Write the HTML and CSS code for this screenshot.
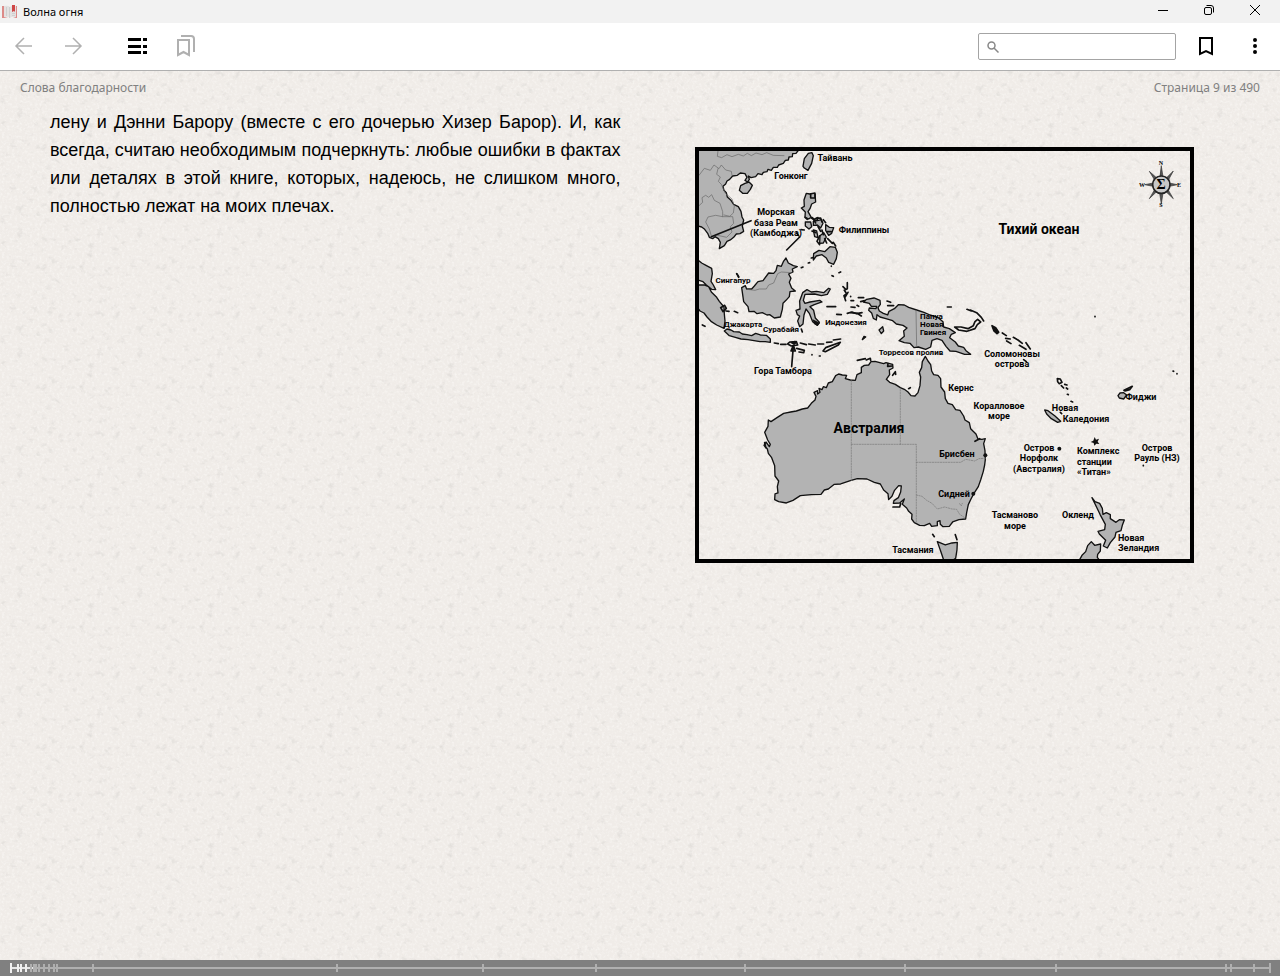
FILE: index.html
```html
<!DOCTYPE html>
<html lang="ru">
<head>
<meta charset="utf-8">
<meta name="viewport" content="width=device-width, initial-scale=1">
<title>Волна огня</title>
<link rel="stylesheet" href="styles.css">
</head>
<body>
<header class="titlebar">
  <svg class="app-icon" viewBox="0 0 16 14" aria-hidden="true">
    <path fill="#e3e1e1" d="M2 1q4-1 6 1 2-2 6-1v11q-4-1-6 1-2-2-6-1z"/>
    <path fill="#dc8a88" d="M0 1h2v11l4 1H0zM14 1h1v12h-4l3-1z"/>
    <path fill="#cfcfcf" d="M4 2h1v9H4zM7 2h1v11H7zM10 8h3v1h-3zM10 10h3v1h-3z"/>
    <path fill="#cf4646" d="M10 0h3v7l-1-1-2 1z"/>
  </svg>
  <h1 class="window-title">Волна огня</h1>
  <div class="window-controls">
    <button class="window-button" aria-label="Свернуть"><svg viewBox="0 0 12 12"><path d="M1 6.500h10"/></svg></button>
    <button class="window-button" aria-label="Восстановить"><svg viewBox="0 0 12 12"><rect x="1.500" y="3.500" width="7" height="7" rx="1.500"/><path d="M3.500 1.500H8q2.500 0 2.500 2.500v4.500"/></svg></button>
    <button class="window-button" aria-label="Закрыть"><svg viewBox="0 0 12 12"><path d="M1 1l10 10M11 1L1 11"/></svg></button>
  </div>
</header>
<nav class="toolbar" aria-label="Панель инструментов">
  <div class="tool-group">
    <button class="tool muted thin" aria-label="Назад"><svg viewBox="0 0 24 24"><path d="M20 12H5M12 4l-8 8 8 8"/></svg></button>
    <button class="tool muted thin" aria-label="Вперёд"><svg viewBox="0 0 24 24"><path d="M4 12h15M12 4l8 8-8 8"/></svg></button>
  </div>
  <div class="tool-group">
    <button class="tool" aria-label="Содержание"><svg viewBox="0 0 24 24"><path class="solid" d="M3 4h13v3H3zM3 11h13v3H3zM3 17h13v3H3zM18 4h4v3h-4zM18 11h4v3h-4zM18 17h4v3h-4z"/></svg></button>
    <button class="tool muted" aria-label="Закладки"><svg viewBox="0 0 24 24"><path d="M4 6h11v15l-5.500-3L4 21zM7 2h10q3 0 3 3v13"/></svg></button>
  </div>
  <div class="tool-group tool-group-end">
    <label class="search">
      <svg viewBox="0 0 12 12" aria-hidden="true"><circle cx="4.500" cy="4.500" r="3.500"/><path d="M7 7l4.500 4.500"/></svg>
      <input type="text" aria-label="Поиск">
    </label>
    <button class="tool" aria-label="Добавить закладку"><svg viewBox="0 0 24 24"><path d="M6 4h12v16l-6-3-6 3z"/></svg></button>
    <button class="tool" aria-label="Меню"><svg viewBox="0 0 24 24"><path class="solid" d="M12 4a2 2 0 1 1 0 4a2 2 0 1 1 0-4M12 10a2 2 0 1 1 0 4a2 2 0 1 1 0-4M12 16a2 2 0 1 1 0 4a2 2 0 1 1 0-4"/></svg></button>
  </div>
</nav>
<main class="reader">
  <div class="running-head"><span>Слова благодарности</span><span>Страница 9 из 490</span></div>
  <div class="spread">
    <p class="page-text">лену и Дэнни Барору (вместе с его дочерью Хизер Барор). И, как всегда, считаю необходимым подчеркнуть: любые ошибки в фактах или деталях в этой книге, которых, надеюсь, не слишком много, полностью лежат на моих плечах.</p>
    <figure class="page-figure">
      <svg class="map" viewBox="0 0 499 416" role="img" aria-label="Карта Австралии и Тихого океана">
        <!-- Indochina, Taiwan, Philippines -->
        <g transform="translate(-5 -7) scale(.3333)">
          <path class="land" d="M20 28L326 30 318 40 308 41 307 50 297 51 295 60 286 61 280 70 266 75 262 82 250 82 244 91 234 88 231 95 220 97 216 104 204 101 197 110 183 113 175 108 178 118 173 126 165 121 171 112 165 101 151 99 142 106 128 108 119 118 111 123 107 132 99 139 102 151 109 158 112 171 122 180 131 193 145 200 153 214 156 231 161 240 157 258 161 274 150 281 139 282 131 292 121 300 111 304 103 317 88 326 91 307 85 296 75 290 68 296 58 292 53 280 44 268 35 261 20 257Z"/>
          <path class="inland" d="M84 33L82 49 95 53 111 44 126 50 145 43 160 48 172 40 184 47 198 39 216 44 230 38 250 46 282 47M27 106L43 85 61 91 72 75 87 86 94 75 107 90 124 94 126 106M84 86L80 103 91 111 85 124 94 133 106 160 126 177 133 198 130 219 119 229 102 225M27 197L38 187 36 173 47 166 56 172 65 164 73 181 90 190 98 215 98 230 77 226 54 231 47 246 58 267 64 288M98 230L128 230 131 250 121 260 126 276 110 292 78 285"/>
          <path class="land" d="M148 151L152 137 165 130 177 126 187 136 181 148 172 160 158 160ZM339 79L343 56 355 40 366 38 370 47 365 70 354 91 343 84ZM349 160L359 162 375 159 377 186 365 192 360 206 354 215 364 232 373 237 384 232 381 242 371 238 361 233 356 237 345 231 346 216 334 204 343 199 342 180ZM370 244L382 242 394 239 399 250 392 264 382 255 370 256ZM346 246L362 246 365 260 357 267 346 258ZM370 270L380 273 384 293 374 290ZM407 254L418 262 431 263 425 280 416 286 407 271ZM390 287L401 278 409 291 400 309 389 310ZM371 341L387 331 404 335 420 320 436 322 442 337 439 356 431 373 416 367 409 354 396 344 379 348 370 360Z"/>
          <path class="coast heavy" d="M362 162v12h13v-12M345 232L352 238M379 235L392 234 396 246M400 239L407 248M366 273L378 278M389 288L381 304 389 314M404 296L410 309M413 296L427 310M430 307L437 318M412 275L424 275M333 269L343 270M320 279L326 287M367 233l10 16M384 260l8 14M396 270l4 14"/>
          <path class="coast heavy" d="M183 242L64 290M290 330L329 291M334 383l5-2M355 369l4-1M364 354l5-1M424 378v1M426 407l4 2M447 398l5-2M140 401l6 9"/>
        </g>
        <!-- Malay Archipelago -->
        <g transform="translate(-5 103) scale(.3333)">
          <path class="land" d="M20 27L35 39 48 46 65 55 67 71 63 94 70 105 77 119 65 118 49 105 39 95 20 89ZM20 105L42 105 56 110 64 126 80 142 88 154 102 171 103 192 105 213 102 235 80 225 63 214 51 201 42 189 30 183 20 170ZM155 113L166 107 170 117 185 117 193 108 204 95 219 92 236 69 251 70 258 62 262 46 274 49 280 35 288 24 295 39 310 47 322 50 307 57 309 66 296 72 303 85 298 97 305 114 316 123 300 125 298 140 288 151 279 160 277 178 271 201 253 204 239 194 231 195 217 188 201 191 192 184 177 185 174 170 161 155ZM103 243L111 237 123 240 131 245 148 246 157 252 171 254 185 257 197 250 211 255 229 256 241 267 241 277 226 275 210 275 192 272 174 269 153 267 136 262 118 257ZM322 194L318 181 330 177 329 153 338 128 351 119 364 126 380 124 401 128 416 115 421 117 412 133 394 137 374 132 345 133 340 151 345 160 360 156 389 151 396 156 373 164 360 170 371 181 376 204 388 217 382 226 368 215 358 190 348 177 342 195 339 222 329 230 323 213 329 198Z"/>
          <path class="inland" d="M171 118L195 121 208 117 229 117 236 105 251 99 263 71 274 66 304 68"/>
          <path class="coast heavy" d="M92 173l12-7 5 9-10 10zM108 183l9 1M133 184l10 4M37 225l8 4M141 72l5 10M253 279l12 2M272 283l16 0M293 282l7-6 19-1 4 10-19 3zM320 295l23 6-2 7-14-2M331 279l18 5M356 282l20 3M383 282h18M410 277l16-1M430 270l22-3M334 237l3 9M366 314v1M388 318h3M399 303l8-10 44-16-6 8-39 20zM472 98v18l-9 5 7 10-8 6 5 15M459 110l6 6M474 127l-9 15M482 139v1M411 170h26M440 193l14 1M472 190l14-4 14 5 16-3M483 152h8M483 171l12 1"/>
          <path class="coast heavy" d="M305 350L310 290M303 303l7-17 6 17z"/>
          <path class="dark" d="M300 278l13-6 8 6-8 7zM368 208l12 6 10 6-8 8-10-6z"/>
        </g>
        <!-- New Guinea and the Solomon Islands -->
        <g transform="translate(155 103) scale(.3333)">
          <path class="land" d="M40 156L50 148 72 144 90 151 91 163 84 173 88 183 100 190 113 195 117 184 133 176 145 164 163 165 176 172 200 180 222 187 240 195 263 202 279 215 281 231 298 236 316 248 304 253 299 263 316 276 325 288 341 292 348 302 362 313 344 313 318 304 300 303 288 289 276 271 261 266 246 271 242 291 227 298 205 291 192 293 180 280 163 278 147 272 163 259 161 243 171 234 159 226 139 222 128 212 105 205 90 201 81 194 79 210 70 205 65 189 56 181 58 174 78 176 80 169 64 169 58 160Z"/>
          <path class="inland" d="M198 181L200 290"/>
          <path class="coast heavy" d="M25 143h16M32 155l12-3M21 166l5 3M111 153l11 4M113 167h18M292 171h12M351 178l13 5M361 180l19 8 14 14 7 11M314 231h19l21 5 16-9 5-12 8-7 9 8-10 8-7 12-24 8-25-4zM426 227l11 6 9 14-5 4-9-8zM457 249l12 8M467 265l14 2M470 273l13 8M490 262l14 8 13 10M508 286l20 12M528 278l13 19M521 329l8 6M2 188l20 2 12 8"/>
          <path class="dark" d="M426 227l12 6 9 14-6 5-10-9z"/>
          <path class="land" d="M87 240L98 230 101 243 94 251ZM37 269L42 259 47 261Z"/>
        </g>
        <!-- Australia and Tasmania -->
        <g transform="translate(55 203) scale(.3333)">
          <path class="land" d="M55 210L63 215 81 203 101 190 122 186 139 183 157 177 173 174 184 160 195 150 198 139 192 127 203 122 203 132 210 127 207 115 216 119 220 110 229 113 235 99 247 95 257 77 266 72 277 75 290 76 286 86 301 90 316 91 321 74 334 68 334 52 343 46 356 45 363 35 375 34 401 41 408 38 428 43 429 54 418 60 419 74 409 88 419 97 436 103 451 113 463 118 474 126 483 137 495 138 504 128 510 107 512 81 508 67 515 53 517 35 526 19 534 33 542 44 545 63 551 74 564 76 572 86 573 111 584 126 586 146 594 160 607 164 617 179 630 181 641 198 645 210 658 218 662 236 678 252 684 267 696 268 706 266 701 281 705 302 706 329 704 345 700 364 692 390 685 410 672 430 663 447 655 464 650 488 647 507 627 509 608 516 598 529 579 530 571 523 570 512 562 515 562 527 545 529 539 520 523 527 509 526 493 518 485 507 486 493 476 484 470 474 457 463 463 447 449 459 430 460 432 452 445 443 452 426 454 408 446 407 433 422 426 439 416 449 414 431 401 420 391 402 373 397 351 387 322 386 301 392 272 402 253 403 235 417 223 420 213 433 184 434 151 437 129 451 109 459 86 455 74 449 75 432 84 429 82 410 86 393 75 378 74 347 65 323 55 310 52 297 42 286 48 276 58 290 61 283 53 270 44 247 54 229Z"/>
          <path class="border" d="M304 92V392M451 119V283M304 283H499V520M499 337H632L647 328 674 333 687 326 706 325M499 435L516 439 530 451 546 460 562 477 584 471 606 477 620 478 629 493 644 503M629 461l5 7 3-8"/>
          <path class="coast heavy" d="M322 31l24-5M349 30l12-5 1 6M428 76l8-11 1 8M476 116l5-3M429 471h20l3-10M548 553l5 7M616 554l5 15M675 274l14-8M414 41l-1 8 14-1M44 278l3 15"/>
          <circle class="dark" cx="706" cy="316" r="6"/><circle class="dark" cx="670" cy="431" r="6"/>
          <path class="land" d="M562 575L586 585 606 579 622 577 621 600 617 625 603 635 581 630 573 606Z"/>
        </g>
        <!-- New Zealand, New Caledonia, Fiji -->
        <g transform="translate(305 213) scale(.3333)">
          <path class="land" d="M276 413L285 425 299 430 307 445 309 463 319 458 331 464 331 476 348 487 358 479 373 480 367 496 363 512 348 517 345 531 331 548 322 564 310 558 317 541 298 522 294 514 314 509 316 493 308 478 300 463 290 442ZM234 608L246 586 257 575 263 557 274 545 284 556 302 552 301 573 293 583 292 592 304 608ZM134 150L144 152 165 168 182 184 173 187 154 176 140 162ZM354 107L360 99 371 98 380 105 371 117 358 114Z"/>
          <path class="coast heavy" d="M172 56l9 1 5 10-8 4-5-6zM184 77l7 7M194 73l7 2M199 84l4 3M202 103l3 1M213 124l5 2M181 157l4 4M372 91l25-12-8 10-14 4M430 316v1M519 33l2 1M531 41v1M285-131v1"/>
          <circle class="dark" cx="178" cy="266" r="6"/>
          <path class="dark" d="M284 231l4 8 9-3-4 9 5 7-9-1-6 6-2-8-9-3 8-4z"/>
        </g>
        <!-- Compass rose -->
        <g transform="translate(305 -7) scale(.3333)">
          <path class="rose" d="M484 78L489 110 501 112 520 93 507 117 508 129 532 134 508 139 506 152 520 176 500 157 489 160 484 192 479 160 468 157 448 176 462 152 460 139 434 134 460 129 462 117 448 94 468 112 479 110Z"/>
          <circle class="rose-ring" cx="484" cy="134" r="26"/>
        </g>
        <g class="labels">
          <text class="compass" x="466" y="18">N</text><text class="compass" x="447" y="40">W</text><text class="compass" x="484" y="40">E</text><text class="compass" x="466" y="60">S</text><text class="sigma" x="466" y="42">Σ</text>
          <text x="140" y="14">Тайвань</text><text x="96" y="32">Гонконг</text>
          <text x="81" y="68">Морская</text><text x="81" y="79">база Реам</text><text x="81" y="89">(Камбоджа)</text>
          <text x="169" y="86">Филиппины</text>
          <text class="small" x="38" y="136">Сингапур</text><text class="small" x="48" y="180">Джакарта</text><text class="small" x="86" y="185">Сурабайя</text><text class="small" x="151" y="178">Индонезия</text>
          <text x="88" y="227">Гора Тамбора</text>
          <text class="small start" x="225" y="172">Папуа</text><text class="small start" x="225" y="180">Новая</text><text class="small start" x="225" y="188">Гвинея</text>
          <text class="small" x="216" y="208">Торресов пролив</text>
          <text x="317" y="210">Соломоновы</text><text x="317" y="220">острова</text>
          <text x="266" y="244">Кернс</text><text x="304" y="262">Коралловое</text><text x="304" y="272">море</text>
          <text class="country" x="174" y="286">Австралия</text><text class="ocean" x="344" y="87">Тихий океан</text>
          <text x="262" y="310">Брисбен</text><text x="259" y="350">Сидней</text><text x="218" y="406">Тасмания</text>
          <text x="320" y="371">Тасманово</text><text x="320" y="382">море</text>
          <text x="370" y="264">Новая</text><text x="391" y="275">Каледония</text><text x="446" y="253">Фиджи</text>
          <text x="344" y="304">Остров</text><text x="344" y="314">Норфолк</text><text x="344" y="325">(Австралия)</text>
          <text class="start" x="382" y="307">Комплекс</text><text class="start" x="382" y="318">станции</text><text class="start" x="382" y="328">«Титан»</text>
          <text x="462" y="304">Остров</text><text x="462" y="314">Рауль (НЗ)</text>
          <text x="383" y="371">Окленд</text><text class="start" x="423" y="394">Новая</text><text class="start" x="423" y="404">Зеландия</text>
        </g>
        <rect class="frame" x="2" y="2" width="495" height="412"/>
      </svg>
    </figure>
  </div>
</main>
<footer class="progress">
  <div class="track">
    <input class="position" type="range" min="1" max="490" value="9" aria-label="Позиция в книге">
    <span class="tick end read" style="left:0%"></span>
    <span class="tick read" style="left:.55%"></span>
    <span class="tick read" style="left:.8%"></span>
    <span class="tick read" style="left:1.2%"></span>
    <span class="tick" style="left:1.6%"></span>
    <span class="tick" style="left:1.85%"></span>
    <span class="tick" style="left:2%"></span>
    <span class="tick" style="left:2.25%"></span>
    <span class="tick" style="left:2.65%"></span>
    <span class="tick" style="left:3.05%"></span>
    <span class="tick" style="left:3.45%"></span>
    <span class="tick" style="left:3.65%"></span>
    <span class="tick" style="left:6.5%"></span>
    <span class="tick" style="left:25.85%"></span>
    <span class="tick" style="left:37.45%"></span>
    <span class="tick" style="left:46.4%"></span>
    <span class="tick" style="left:58.25%"></span>
    <span class="tick" style="left:70.95%"></span>
    <span class="tick" style="left:82.95%"></span>
    <span class="tick" style="left:96.4%"></span>
    <span class="tick" style="left:96.8%"></span>
    <span class="tick" style="left:98.65%"></span>
    <span class="tick end" style="left:99.9%"></span>
  </div>
</footer>
</body>
</html>
```
FILE: styles.css
```css
* { box-sizing: border-box; }

body {
  margin: 0;
  min-height: 100vh;
  display: flex;
  flex-direction: column;
  font-family: "Noto Sans", sans-serif;
  color: #000;
  background: #f1eeea;
}

button {
  padding: 0;
  border: 0;
  background: none;
  color: inherit;
  display: flex;
  align-items: center;
  justify-content: center;
}

svg { fill: none; stroke: currentColor; }

.titlebar {
  display: flex;
  align-items: center;
  height: 23px;
  padding: 0 2px;
  background: #f2f2f2;
}
.app-icon { width: 16px; height: 14px; stroke: none; }
.window-title {
  margin: 0;
  padding-left: 5px;
  font-size: 11px;
  line-height: 16px;
  font-weight: 400;
}
.window-controls { display: flex; margin-left: auto; padding-bottom: 3px; }
.window-button { width: 46px; height: 20px; }
.window-button svg { width: 12px; height: 12px; }

.toolbar {
  display: flex;
  align-items: center;
  gap: 16px;
  height: 48px;
  background: #fff;
  border-bottom: 1px solid #b0b0b0;
}
.tool-group { display: flex; align-items: center; gap: 1px; }
.tool-group-end { margin-left: auto; padding-right: 1px; }
.tool { width: 48px; height: 46px; padding-bottom: 2px; }
.tool svg { width: 24px; height: 24px; stroke-width: 2; }
.tool.muted { color: #b0b0b0; }
.tool.thin svg { stroke-width: 1.5; }
.tool .solid { fill: currentColor; stroke: none; }

.search {
  display: flex;
  align-items: center;
  width: 198px;
  height: 27px;
  margin-right: 5px;
  padding: 0 8px;
  border: 1px solid #a4a4a4;
  border-radius: 2px;
  color: #888;
}
.search svg { width: 12px; height: 12px; flex: none; stroke-width: 1.5; }
.search input {
  width: 100%;
  min-width: 0;
  border: 0;
  outline: 0;
  background: none;
  font: 13px "Noto Sans", sans-serif;
}

.reader {
  flex: 1;
  background: #f0ece8 url("data:image/svg+xml,%3Csvg xmlns='http://www.w3.org/2000/svg' width='120' height='120'%3E%3Cfilter id='a' x='0' y='0' width='100%25' height='100%25'%3E%3CfeTurbulence type='fractalNoise' baseFrequency='.125 .15' numOctaves='4' seed='21' stitchTiles='stitch'/%3E%3CfeColorMatrix values='0 0 0 0 .55 0 0 0 0 .54 0 0 0 0 .52 1.1 0 0 0 -.64'/%3E%3C/filter%3E%3Cfilter id='b' x='0' y='0' width='100%25' height='100%25'%3E%3CfeTurbulence type='fractalNoise' baseFrequency='.4' numOctaves='2' seed='3' stitchTiles='stitch'/%3E%3CfeColorMatrix values='0 0 0 0 1 0 0 0 0 .99 0 0 0 0 .97 1.2 0 0 0 -.55'/%3E%3C/filter%3E%3Crect width='120' height='120' filter='url(%23b)'/%3E%3Crect width='120' height='120' filter='url(%23a)'/%3E%3C/svg%3E");
}
.running-head {
  display: flex;
  justify-content: space-between;
  padding: 8px 20px 11px;
  font-size: 12px;
  line-height: 18px;
  color: #808080;
}
.spread {
  display: grid;
  grid-template-columns: 1fr 1fr;
  gap: 39px;
  padding: 0 50px;
}
.page-text {
  margin: 0;
  font: 18px/28px "Liberation Sans", sans-serif;
  text-align: justify;
}
.page-figure { margin: 39px 0 0; }

.map { display: block; width: 100%; max-width: 499px; margin: 0 auto; overflow: hidden; }
.map path { stroke-linejoin: round; stroke-linecap: round; }
.land { fill: #b3b3b3; stroke: #111; stroke-width: 4; }
.coast { stroke: #111; stroke-width: 4; }
.heavy { stroke-width: 5; }
.inland { stroke: #666; stroke-width: 2; }
.border { stroke: #777; stroke-width: 2; stroke-dasharray: 4 4; }
.dark { fill: #111; stroke: none; }
.rose { fill: #555; stroke: #333; stroke-width: 2; }
.rose-ring { fill: #c8c8c8; stroke: #222; stroke-width: 5; }
.frame { stroke: #000; stroke-width: 4; }
.labels {
  fill: #000;
  stroke: none;
  font: bold 9px Roboto, "Liberation Sans", sans-serif;
  text-anchor: middle;
}
.small { font-size: 8px; }
.start { text-anchor: start; }
.country, .ocean { font-size: 14px; }
.compass { font: bold 6px "Liberation Serif", serif; }
.sigma { font: bold 14px "Liberation Serif", serif; }

.progress { height: 16px; padding: 0 10px; background: #808080; }
.track { position: relative; height: 16px; }
.position {
  display: block;
  width: 100%;
  height: 16px;
  margin: 0;
  appearance: none;
  background: linear-gradient(90deg, #e6e6e6 2%, #b0b0b0 2%) center / 100% 2px no-repeat;
}
.position::-webkit-slider-thumb { appearance: none; width: 2px; height: 2px; }
.tick {
  position: absolute;
  top: 4px;
  width: 2px;
  height: 8px;
  background: #b0b0b0;
  pointer-events: none;
}
.tick.end { top: 3px; height: 10px; }
.tick.read { background: #f0f0f0; }
```
